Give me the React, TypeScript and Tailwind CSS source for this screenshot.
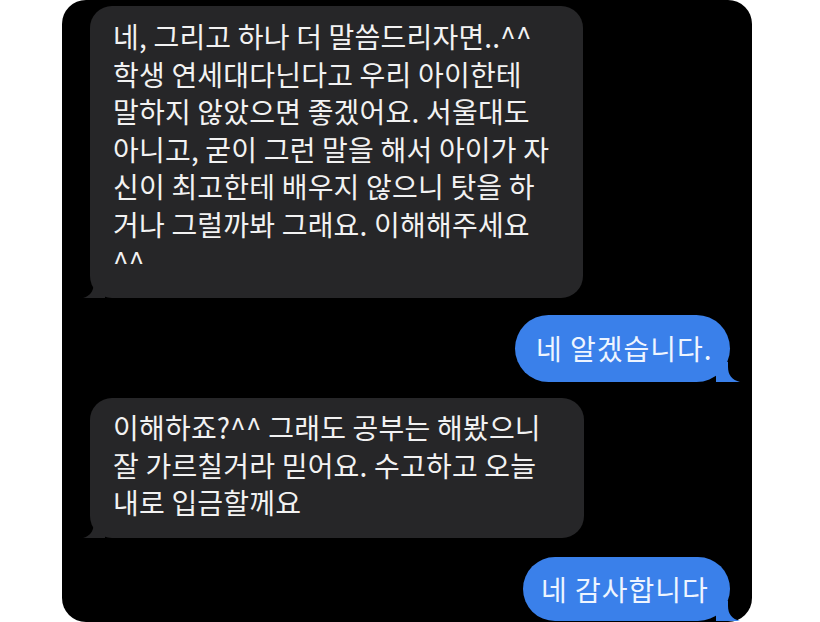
import type { ReactNode } from "react";

const font = { fontFamily: '"Noto Sans CJK KR", "Noto Sans", sans-serif' };

const GreyTail = () => (
  <svg className="absolute bottom-0 left-[-7px]" width="22" height="20" viewBox="0 0 22 20">
    <path d="M22 0 L22 20 L0 20 C7 18 10 14 11 6 L11 0 Z" fill="#262628" />
  </svg>
);

const BlueTail = () => (
  <svg className="absolute bottom-0 right-[-10px]" width="24" height="20" viewBox="0 0 24 20">
    <path d="M0 0 L0 20 L24 20 C16 18 12 13 12 5 L12 0 Z" fill="#3a80ea" />
  </svg>
);

const Incoming = ({ lines, className }: { lines: string[]; className: string }) => (
  <div className={`relative rounded-[22px] bg-[#262628] pl-[23px] text-[28px] leading-[37.5px] tracking-[0.2px] text-[#f2f2f2] ${className}`}>
    {lines.map((l, i) => (
      <div key={i} className="whitespace-nowrap">{l}</div>
    ))}
    <GreyTail />
  </div>
);

const Outgoing = ({ children, className }: { children: ReactNode; className: string }) => (
  <div className={`relative self-end rounded-[34px] bg-[#3a80ea] text-[28px] leading-[37px] tracking-[1px] text-[#eef5ff] ${className}`}>
    <span className="whitespace-nowrap">{children}</span>
    <BlueTail />
  </div>
);

export default function App() {
  return (
    <div className="h-[622px] w-[820px] overflow-hidden bg-white" style={font}>
      <div className="ml-[62px] flex h-[622px] w-[690px] flex-col rounded-[24px] bg-black pl-[28px] pr-[22px] pt-[6px]">
        <Incoming
          className="h-[292px] w-[493px] pt-[12px]"
          lines={[
            "네, 그리고 하나 더 말씀드리자면..^^",
            "학생 연세대다닌다고 우리 아이한테",
            "말하지 않았으면 좋겠어요. 서울대도",
            "아니고, 굳이 그런 말을 해서 아이가 자",
            "신이 최고한테 배우지 않으니 탓을 하",
            "거나 그럴까봐 그래요. 이해해주세요",
            "^^",
          ]}
        />
        <Outgoing className="mt-[17px] flex h-[67px] w-[215px] items-center pl-[21px]">네 알겠습니다.</Outgoing>
        <Incoming
          className="mt-[16px] h-[140px] w-[494px] pt-[11px] leading-[36px]"
          lines={["이해하죠?^^ 그래도 공부는 해봤으니", "잘 가르칠거라 믿어요. 수고하고 오늘", "내로 입금할께요"]}
        />
        <Outgoing className="mt-[19px] flex h-[64px] w-[207px] items-center pl-[18px]">네 감사합니다</Outgoing>
      </div>
    </div>
  );
}
